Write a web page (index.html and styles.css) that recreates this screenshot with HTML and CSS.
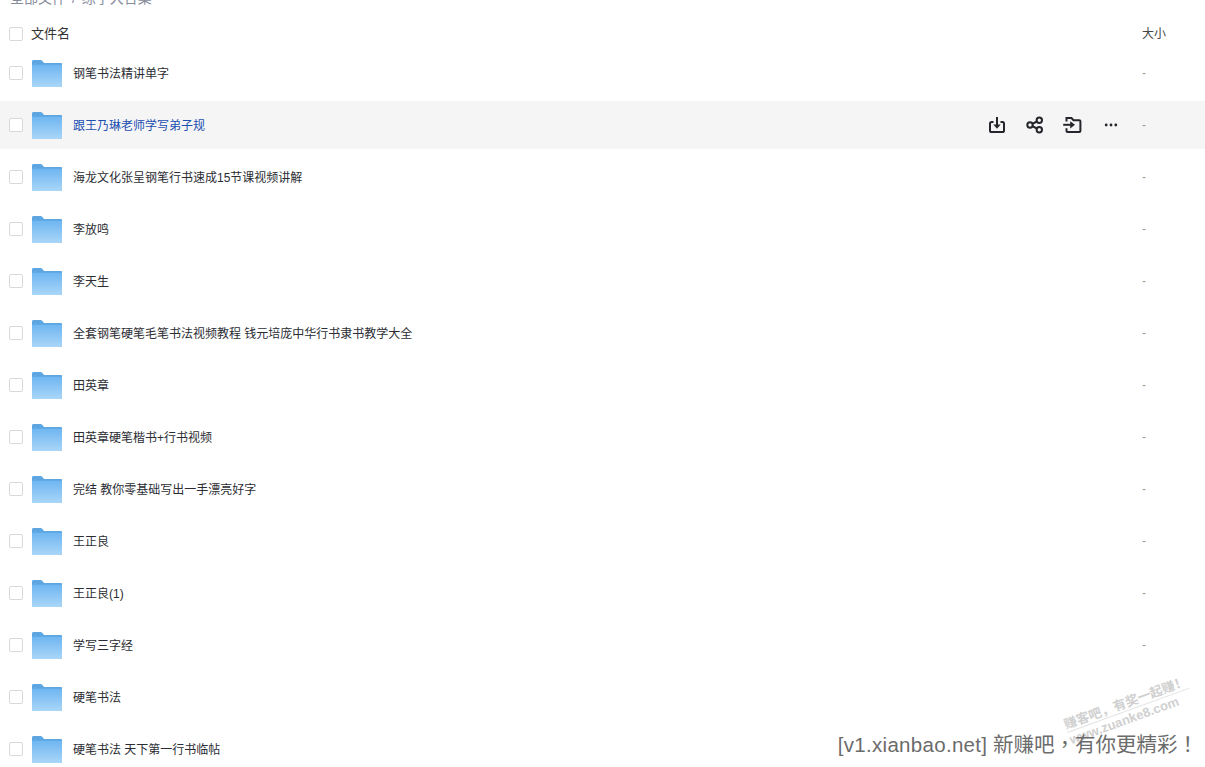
FILE: index.html
```html
<!DOCTYPE html>
<html lang="zh-CN">
<head>
  <meta charset="UTF-8" />
  <title>文件列表</title>
  <link rel="stylesheet" href="styles.css">
</head>
<body>
  <svg class="icon-defs" width="0" height="0">
    <defs>
      <linearGradient id="folder-body" x1="0" y1="0" x2="0" y2="1">
        <stop offset="0" stop-color="#6fb6f1" />
        <stop offset="1" stop-color="#a9d6f8" />
      </linearGradient>
      <symbol id="folder" viewBox="0 0 30 28" preserveAspectRatio="none">
        <path d="M0 1.500C0 .7.7 0 1.500 0h7.200c.6 0 1.100.3 1.500.7L12 3h17c.6 0 1 .4 1 1v23c0 .6-.4 1-1 1H1c-.6 0-1-.4-1-1z" fill="#5da6e2" />
        <path d="M0 5h30v22c0 .6-.4 1-1 1H1c-.6 0-1-.4-1-1z" fill="url(#folder-body)" />
      </symbol>
    </defs>
  </svg>

  <div class="page">
    <div class="breadcrumb">全部文件 <span class="sep">/</span> 练字大合集</div>

    <div class="list-head">
      <span class="check"></span>
      <span class="head-name">文件名</span>
      <span class="col-size">大小</span>
    </div>

    <div class="file-list">
      <div class="file-row">
        <span class="check"></span>
        <svg class="folder"><use href="#folder" /></svg>
        <span class="file-name">钢笔书法精讲单字</span>
        <span class="col-size dash">-</span>
      </div>
      <div class="file-row active">
        <span class="check"></span>
        <svg class="folder"><use href="#folder" /></svg>
        <span class="file-name">跟王乃琳老师学写弟子规</span>
        <div class="row-actions">
          <svg viewBox="0 0 18 18"><path d="M5.500 6H3.600C2.700 6 2 6.700 2 7.600v6.800C2 15.300 2.700 16 3.600 16h10.800c.9 0 1.600-.7 1.600-1.600V7.600c0-.9-.7-1.600-1.600-1.600h-1.900" /><path d="M9 1v9" /><path class="solid" d="M5.300 8.500h7.400L9 12.800z" /></svg>
          <svg viewBox="0 0 18 18"><circle cx="4" cy="9" r="2.700" /><circle cx="13.300" cy="4.300" r="2.700" /><circle cx="13.300" cy="13.700" r="2.700" /><path d="M6.400 7.800l4.500-2.300M6.400 10.200l4.500 2.300" /></svg>
          <svg viewBox="0 0 18 18"><path d="M2.500 5.500V2h5l2 2.200h5.800c.6 0 1.100.5 1.100 1.100v9.600c0 .6-.5 1.100-1.100 1.100H3.600c-.6 0-1.100-.5-1.100-1.100v-2.600" /><path d="M-.8 8.800h7.500" /><path class="solid" d="M6.200 5.200l4.800 3.600-4.800 3.600z" /></svg>
          <svg viewBox="0 0 18 18"><circle class="solid" cx="4.200" cy="9" r="1.400" /><circle class="solid" cx="9" cy="9" r="1.400" /><circle class="solid" cx="13.800" cy="9" r="1.400" /></svg>
        </div>
        <span class="col-size dash">-</span>
      </div>
      <div class="file-row">
        <span class="check"></span>
        <svg class="folder"><use href="#folder" /></svg>
        <span class="file-name">海龙文化张呈钢笔行书速成15节课视频讲解</span>
        <span class="col-size dash">-</span>
      </div>
      <div class="file-row">
        <span class="check"></span>
        <svg class="folder"><use href="#folder" /></svg>
        <span class="file-name">李放鸣</span>
        <span class="col-size dash">-</span>
      </div>
      <div class="file-row">
        <span class="check"></span>
        <svg class="folder"><use href="#folder" /></svg>
        <span class="file-name">李天生</span>
        <span class="col-size dash">-</span>
      </div>
      <div class="file-row">
        <span class="check"></span>
        <svg class="folder"><use href="#folder" /></svg>
        <span class="file-name">全套钢笔硬笔毛笔书法视频教程 钱元培庞中华行书隶书教学大全</span>
        <span class="col-size dash">-</span>
      </div>
      <div class="file-row">
        <span class="check"></span>
        <svg class="folder"><use href="#folder" /></svg>
        <span class="file-name">田英章</span>
        <span class="col-size dash">-</span>
      </div>
      <div class="file-row">
        <span class="check"></span>
        <svg class="folder"><use href="#folder" /></svg>
        <span class="file-name">田英章硬笔楷书+行书视频</span>
        <span class="col-size dash">-</span>
      </div>
      <div class="file-row">
        <span class="check"></span>
        <svg class="folder"><use href="#folder" /></svg>
        <span class="file-name">完结 教你零基础写出一手漂亮好字</span>
        <span class="col-size dash">-</span>
      </div>
      <div class="file-row">
        <span class="check"></span>
        <svg class="folder"><use href="#folder" /></svg>
        <span class="file-name">王正良</span>
        <span class="col-size dash">-</span>
      </div>
      <div class="file-row">
        <span class="check"></span>
        <svg class="folder"><use href="#folder" /></svg>
        <span class="file-name">王正良(1)</span>
        <span class="col-size dash">-</span>
      </div>
      <div class="file-row">
        <span class="check"></span>
        <svg class="folder"><use href="#folder" /></svg>
        <span class="file-name">学写三字经</span>
        <span class="col-size dash">-</span>
      </div>
      <div class="file-row">
        <span class="check"></span>
        <svg class="folder"><use href="#folder" /></svg>
        <span class="file-name">硬笔书法</span>
      </div>
      <div class="file-row">
        <span class="check"></span>
        <svg class="folder"><use href="#folder" /></svg>
        <span class="file-name">硬笔书法 天下第一行书临帖</span>
      </div>
    </div>
  </div>

  <div class="stamp">
    <div class="stamp-top">赚客吧，有奖一起赚！</div>
    <div class="stamp-url">www.zuanke8.com</div>
  </div>
  <div class="watermark" lang="zh-Hant"><span class="wm-url">[v1.xianbao.net]</span> 新赚吧，有你更精彩！</div>
</body>
</html>
```

FILE: styles.css
```css
html, body {
  height: 100%;
  overflow: hidden;
}

body {
  margin: 0;
  background-color: #ffffff;
  color: #333333;
  font-family: 'Liberation Sans', 'Noto Sans CJK SC', sans-serif;
  font-size: 12px;
}

.icon-defs {
  position: absolute;
}

.page {
  margin-top: -12px;
}

.breadcrumb {
  height: 20px;
  line-height: 20px;
  padding-left: 10px;
  color: #878c9c;
  font-size: 14px;
}

.breadcrumb .sep {
  margin: 0 2px;
}

.list-head {
  display: flex;
  align-items: center;
  height: 52px;
  margin-top: -2px;
  padding-left: 9px;
}

.list-head .check {
  margin-top: 4px;
}

.head-name {
  flex-grow: 1;
  margin-left: 8px;
  color: #333333;
  font-size: 13px;
}

.col-size {
  width: 63px;
  flex-shrink: 0;
  color: #444444;
}

.check {
  width: 12px;
  height: 12px;
  flex-shrink: 0;
  border: 1px solid #d9d9dc;
  border-radius: 2px;
  background-color: #ffffff;
}

.file-list {
  display: flex;
  flex-direction: column;
  gap: 4px;
  margin-top: -9px;
}

.file-row {
  display: flex;
  align-items: center;
  height: 48px;
  flex-shrink: 0;
  padding-left: 9px;
}

.file-row.active {
  background-color: #f5f5f6;
}

.folder {
  width: 30px;
  height: 27px;
  flex-shrink: 0;
  margin-left: 9px;
}

.file-name {
  flex-grow: 1;
  margin-left: 11px;
  padding-bottom: 2px;
  color: #2b2d33;
}

.file-row.active .file-name {
  color: #1c4fb0;
}

.dash {
  color: #999999;
}

.row-actions {
  display: flex;
  align-items: center;
  gap: 20px;
  margin-right: 22px;
}

.row-actions svg {
  width: 18px;
  height: 18px;
  overflow: visible;
  fill: none;
  stroke: #25262b;
  stroke-width: 2;
}

.row-actions .solid {
  fill: #25262b;
  stroke: none;
}

.watermark {
  position: absolute;
  right: 7px;
  bottom: 8px;
  color: #6b6b6b;
  font-family: 'Liberation Sans', 'Noto Sans CJK TC', sans-serif;
  font-size: 20.5px;
  line-height: 28px;
  white-space: nowrap;
}

.wm-url {
  letter-spacing: 0.3px;
}

.stamp {
  position: absolute;
  left: 1062px;
  top: 718px;
  color: #d0d0d0;
  transform: rotate(-20deg);
  transform-origin: left top;
  white-space: nowrap;
}

.stamp-top {
  font-size: 13px;
  font-weight: bold;
  line-height: 15px;
  border-bottom: 1px solid #e2e2e2;
}

.stamp-url {
  font-size: 13px;
  font-weight: bold;
  line-height: 15px;
}
```
